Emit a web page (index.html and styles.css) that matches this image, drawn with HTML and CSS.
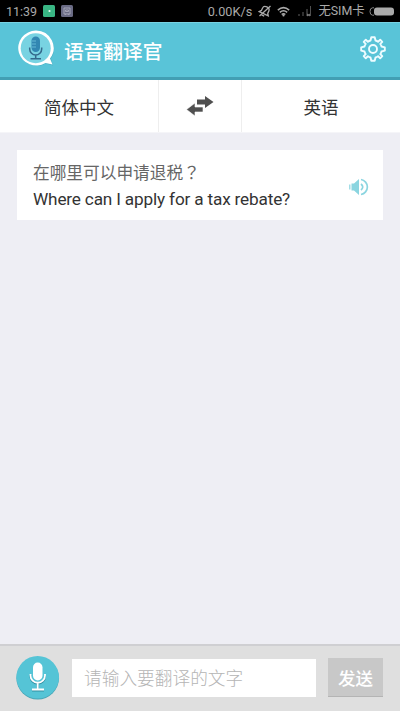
FILE: index.html
```html
<!DOCTYPE html>
<html lang="zh-CN">
<head>
<meta charset="utf-8">
<title>语音翻译官</title>
<link rel="stylesheet" href="styles.css">
</head>
<body>
<div class="app">
  <div class="status">
    <span class="time">11:39</span>
    <svg class="note green" viewBox="0 0 12 12"><rect width="12" height="12" rx="1.5" fill="#39b583"/><circle cx="6.500" cy="6" r="1.1" fill="#e8fff4"/></svg>
    <svg class="note" viewBox="0 0 12 12"><rect width="12" height="12" rx="1.5" fill="#6a6b84"/><path d="M3 3h6v6H3zM4.500 5h3v1.500h-3zM4 10l1-1.500M8 10L7 8.500" fill="none" stroke="#a9aabb" stroke-width=".9"/></svg>
    <span class="speed">0.00K/s</span>
    <svg class="mute" viewBox="0 0 14 14" fill="none" stroke="#aaa" stroke-width="1.300"><g transform="rotate(25 7 7)"><path d="M2 10h10L10.500 8V5.500C10.500 3.500 9 2.500 7 2.500S3.500 3.500 3.500 5.500V8zM5.500 12h3"/></g><path d="M1.500 12L12.500 2"/></svg>
    <svg class="wifi" viewBox="0 0 14 12" fill="none" stroke="#aaa" stroke-width="1.700"><path d="M.8 4.500Q7-1 13.200 4.500M3 7Q7 3.400 11 7M5 9.300Q7 7.500 9 9.300"/><circle cx="7" cy="10.300" r="1.200" fill="#aaa" stroke="none"/></svg>
    <svg class="signal" viewBox="0 0 14 12"><path d="M0 9h2v2H0zM4 7h2v4H4zM8 4h2v7H8z" fill="#303030"/><path d="M12 1h1v10h-1z" fill="#505050"/><path d="M9 9l3 2M12 9l-3 2" stroke="#888"/></svg>
    <span class="sim">无SIM卡</span>
    <svg class="battery" viewBox="0 0 25 9"><rect x="5" y=".5" width="20" height="8" rx="3" fill="#aaa"/><path d="M5 .8H3.500Q1 1 1 4.500T3.500 8.200H5" fill="none" stroke="#888"/></svg>
  </div>
  <header class="header">
    <svg class="logo" viewBox="0 0 40 40">
      <path d="M19 3a17 17 0 1 0 9.500 31.500L36 36.500l-2-7A17 17 0 0 0 19 3z" fill="#3fa5b8" opacity=".6"/>
      <path d="M19 1.500a18 17.500 0 1 0 9.500 32.500L35.500 35.500 33 29.500A18 17.500 0 0 0 19 1.500z" fill="#fff"/>
      <circle cx="18.700" cy="19.200" r="15" fill="#78d3e2"/>
      <path d="M12.700 18.500v1.500a6 6 0 0 0 12 0v-1.500M18.700 26v3.500M13.500 29.700h10.500" fill="none" stroke="#34698b" stroke-width="1.500"/>
      <rect x="14.500" y="7.500" width="8.500" height="15.500" rx="4.200" fill="#3287b2"/>
      <path d="M15 12h4M15 15h4M15 18h4" stroke="#65b8d5" stroke-width="1"/>
    </svg>
    <h1 class="title">语音翻译官</h1>
    <svg class="gear" viewBox="-13 -13 26 26" fill="none" stroke="#edfcff" stroke-width="1.900" stroke-linejoin="round"><path d="M-1.700-11.800H1.700L2.500-8.500Q4-8.200 5.100-7.300L7.200-9.300 9.300-7.200 7.300-5.100Q8.200-4 8.500-2.500L11.800-1.700V1.700L8.500 2.500Q8.200 4 7.300 5.100L9.300 7.200 7.200 9.300 5.100 7.300Q4 8.200 2.500 8.500L1.700 11.800H-1.700L-2.500 8.500Q-4 8.200-5.100 7.300L-7.200 9.300-9.300 7.200-7.300 5.100Q-8.200 4-8.500 2.500L-11.800 1.700V-1.700L-8.500-2.500Q-8.200-4-7.300-5.100L-9.300-7.200-7.200-9.300-5.100-7.300Q-4-8.200-2.500-8.500z"/><circle r="4"/></svg>
  </header>
  <nav class="langs">
    <div class="lang from">简体中文</div>
    <div class="swap"><svg viewBox="0 0 28 20"><path d="M11 3.500h8V0l8.500 6-8.500 6V8.500h-8z" fill="#505050"/><path d="M17 11H9V7l-8.500 6.500L9 20v-4h8z" fill="#505050" stroke="#fff" stroke-width=".6"/></svg></div>
    <div class="lang to">英语</div>
  </nav>
  <main class="chat">
    <article class="card">
      <div class="texts">
        <p class="source">在哪里可以申请退税<span class="mark" lang="zh-TW">？</span></p>
        <p class="result">Where can I apply for a tax rebate?</p>
      </div>
      <svg class="speaker" viewBox="0 0 20 20"><path d="M.8 7.500v5" stroke="#8bd5e0" stroke-width="1.200"/><path d="M2.500 6.500H5L10 2v16L5 13.500H2.500z" fill="#8bd5e0"/><path d="M12 7q3.500 3 0 6M12 2.500a7.600 7.600 0 0 1 0 15" fill="none" stroke="#8bd5e0" stroke-width="1.700"/></svg>
    </article>
  </main>
  <footer class="bar">
    <svg class="mic" viewBox="0 0 44 45"><circle cx="21.700" cy="23.200" r="21.300" fill="#48a6b7"/><circle cx="21.700" cy="22.200" r="21.300" fill="#55c4d6"/><g transform="translate(0 1)" fill="none" stroke="#318fa2"><path d="M14.500 19v1.500a7.200 7.200 0 0 0 14.500 0V19M21.700 28v6M16 34.500h12" stroke-width="2"/></g><path d="M14.500 19v1.500a7.200 7.200 0 0 0 14.500 0V19M21.700 28v6M16 34.500h12" fill="none" stroke="#fff" stroke-width="1.800"/><rect x="17" y="7.500" width="9.500" height="18" rx="4.700" fill="#fff"/></svg>
    <div class="field">请输入要翻译的文字</div>
    <div class="send">发送</div>
  </footer>
</div>
</body>
</html>
```
FILE: styles.css
```css
* { box-sizing: border-box; }
body { margin: 0; font-family: Roboto, "Noto Sans CJK SC", sans-serif; }
h1, p { margin: 0; font-weight: 400; }
svg { display: block; flex: none; }
.app { width: 400px; height: 711px; display: flex; flex-direction: column; background: #eeeef4; overflow: hidden; white-space: nowrap; }
.status { height: 22px; flex: none; background: #000; color: #aaa; display: flex; align-items: center; padding: 0 6px; font-size: 12px; }
.time { width: 37px; font-size: 12.500px; }
.note { width: 12px; height: 12px; margin-right: 6px; }
.speed { width: 51px; margin-left: 129px; font-size: 12.700px; }
.mute { width: 14px; height: 14px; margin-right: 5px; }
.wifi { width: 13px; height: 11px; margin-right: 8px; }
.signal { width: 14px; height: 12px; margin-right: 6px; }
.sim { width: 51px; line-height: 20px; font-size: 12.400px; }
.battery { width: 25px; height: 9px; }
.header { height: 58px; flex: none; display: flex; align-items: center; padding: 0 14px 2px 17px; background: #59c4d8; border-top: 1px solid #78d3e3; border-bottom: 3px solid #429fb4; }
.logo { width: 40px; height: 40px; }
.title { margin-left: 7px; padding-top: 8px; flex: 1; color: #fff; font-size: 19.700px; font-weight: 500; line-height: 28px; }
.gear { width: 26px; height: 26px; }
.langs { height: 53px; flex: none; display: grid; grid-template-columns: 158px 84px 158px; background: #fff; color: #333; font-size: 17.500px; border-bottom: 1px solid #f5f5f8; }
.lang, .swap { display: flex; align-items: center; justify-content: center; }
.swap { border: solid #eee; border-width: 0 1px; }
.swap svg { width: 28px; height: 20px; }
.chat { flex: 1; padding: 17px; }
.card { height: 70px; display: flex; align-items: center; background: #fff; padding: 0 14px 0 16px; }
.texts { flex: 1; padding-top: 1px; }
.source { color: #666; font-size: 16.700px; line-height: 26px; }
.mark { font-family: "Noto Sans CJK TC", sans-serif; }
.result { color: #333; font-size: 17.200px; letter-spacing: -.17px; line-height: 25px; }
.speaker { width: 20px; height: 20px; margin-top: 3px; }
.bar { height: 67px; flex: none; display: flex; align-items: center; padding: 0 17px 2px 16px; border-top: 2px solid #cfcfd2; background: #dfdfdf; }
.mic { width: 44px; height: 45px; }
.field { width: 244px; height: 38px; margin-left: 12px; padding-left: 12px; background: #fff; color: #b5b5b5; font-size: 17.700px; font-weight: 300; line-height: 41px; }
.send { width: 55px; height: 39px; margin-left: 12px; background: #c8c8c8; border-bottom: 1px solid #b4b4b4; color: #fff; font-size: 17.500px; font-weight: 500; line-height: 42px; text-align: center; }
```
